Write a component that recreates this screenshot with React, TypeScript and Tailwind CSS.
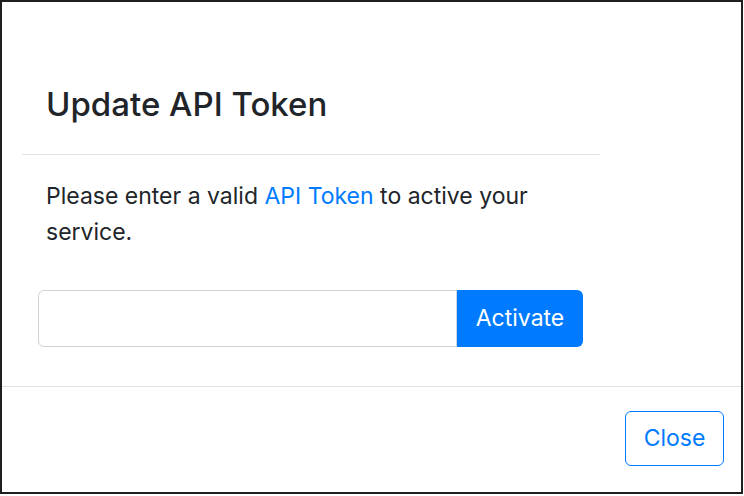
export default function App() {
  return (
    <div className="w-[744px] h-[496px] bg-white" style={{ fontFamily: '"Inter", "Liberation Sans", sans-serif' }}>
      <div className="w-[743px] h-[494px] border-2 border-[#1e1e1e] flex flex-col text-[#212529]">
        <div className="ml-[20px] w-[578px] border-b border-[#dee2e6] pt-[82px] pb-[30px] pl-[24px]">
          <h3 className="text-[33px] leading-[40px] font-medium m-0">Update API Token</h3>
        </div>
        <div className="ml-[20px] w-[578px] px-[24px] pt-[23px]">
          <p className="text-[23px] leading-[36px] m-0">
            Please enter a valid <span className="text-[#007bff]">API Token</span> to active your service.
          </p>
        </div>
        <div className="ml-[36px] mt-[40px] flex h-[57px] w-[545px]">
          <input className="flex-1 border border-[#ced4da] rounded-l-[6px] outline-none px-3" />
          <button className="w-[126px] bg-[#007bff] text-white text-[23px] rounded-r-[6px]">Activate</button>
        </div>
        <div className="mt-[39px] border-t border-[#dee2e6] flex justify-end pt-[24px] pr-[17px]">
          <button className="w-[99px] h-[55px] border border-[#007bff] text-[#007bff] text-[23px] rounded-[6px]">Close</button>
        </div>
      </div>
    </div>
  );
}
